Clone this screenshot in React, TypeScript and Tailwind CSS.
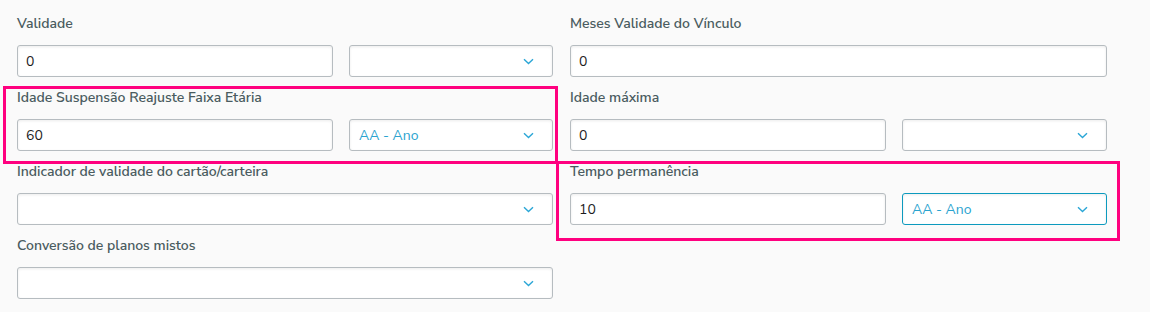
import React from 'react';

const font = { fontFamily: '"Nunito Sans", Lato, "Open Sans", sans-serif' };

const Chevron = () => (
  <svg width="11" height="7" viewBox="0 0 11 7" className="shrink-0">
    <path d="M1 1.2 L5.5 5.5 L10 1.2" fill="none" stroke="#2aa6d6" strokeWidth="1.4" />
  </svg>
);

const Label = ({ children }: { children: React.ReactNode }) => (
  <div className="h-[20px] leading-[20px] text-[14px] font-semibold text-[#4a5c60]">{children}</div>
);

const TextInput = ({ value, className = '' }: { value: string; className?: string }) => (
  <div
    className={`h-[32px] flex items-center px-[8px] bg-white border border-[#b6bcc0] rounded-[3px] shadow-[inset_0_1px_3px_rgba(0,0,0,0.08)] text-[14px] text-[#1c1c1c] ${className}`}
  >
    {value}
  </div>
);

const Select = ({ value = '', focused = false, className = '' }: { value?: string; focused?: boolean; className?: string }) => (
  <div
    className={`h-[32px] flex items-center justify-between pl-[9px] pr-[18px] bg-white rounded-[3px] shadow-[inset_0_1px_3px_rgba(0,0,0,0.08)] text-[14px] text-[#2aa3cf] border ${
      focused ? 'border-[#0c9abe]' : 'border-[#b6bcc0]'
    } ${className}`}
  >
    <span>{value}</span>
    <Chevron />
  </div>
);

const App = () => {
  return (
    <div className="relative w-[1150px] h-[312px] bg-[#fafafa] overflow-hidden" style={font}>
      <div className="grid grid-cols-[536px_537px] gap-x-[17px] gap-y-[11px] pl-[17px] pt-[14px]">
        {/* row 1 */}
        <div>
          <Label>Validade</Label>
          <div className="flex gap-[16px] mt-[11px]">
            <TextInput value="0" className="w-[316px]" />
            <Select className="flex-1" />
          </div>
        </div>
        <div>
          <Label>Meses Validade do Vínculo</Label>
          <div className="mt-[11px]">
            <TextInput value="0" />
          </div>
        </div>

        {/* row 2 */}
        <div>
          <Label>Idade Suspensão Reajuste Faixa Etária</Label>
          <div className="flex gap-[16px] mt-[11px]">
            <TextInput value="60" className="w-[316px]" />
            <Select value="AA - Ano" className="flex-1" />
          </div>
        </div>
        <div>
          <Label>Idade máxima</Label>
          <div className="flex gap-[16px] mt-[11px]">
            <TextInput value="0" className="w-[316px]" />
            <Select className="flex-1" />
          </div>
        </div>

        {/* row 3 */}
        <div>
          <Label>Indicador de validade do cartão/carteira</Label>
          <div className="mt-[11px]">
            <Select />
          </div>
        </div>
        <div>
          <Label>Tempo permanência</Label>
          <div className="flex gap-[16px] mt-[11px]">
            <TextInput value="10" className="w-[316px]" />
            <Select value="AA - Ano" focused className="flex-1" />
          </div>
        </div>

        {/* row 4 */}
        <div>
          <Label>Conversão de planos mistos</Label>
          <div className="mt-[11px]">
            <Select />
          </div>
        </div>
      </div>

      {/* highlight annotations */}
      <div className="absolute left-[3px] top-[86px] w-[555px] h-[78px] border-[3px] border-[#ff007f] pointer-events-none" />
      <div className="absolute left-[556px] top-[161px] w-[564px] h-[80px] border-[3px] border-[#ff007f] pointer-events-none" />
    </div>
  );
};

export default App;
